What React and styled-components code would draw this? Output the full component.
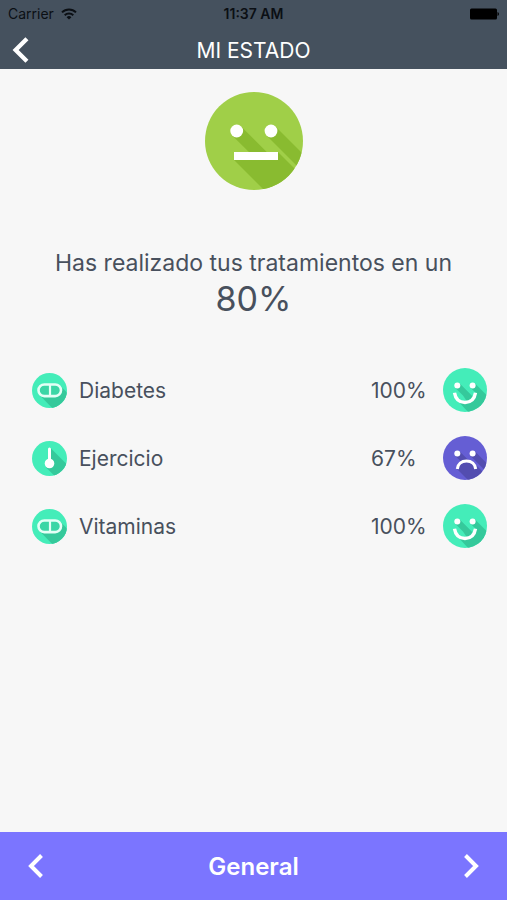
import { useId } from 'react';
import styled, { createGlobalStyle } from 'styled-components';

const treatments = [
    { name: 'Diabetes', icon: 'pill', percent: 100, mood: 'happy' },
    { name: 'Ejercicio', icon: 'thermometer', percent: 67, mood: 'sad' },
    { name: 'Vitaminas', icon: 'pill', percent: 100, mood: 'happy' },
];

const WifiIcon = () => (
    <svg width="16" height="12" viewBox="0 0 16 12" fill="none" stroke="#0b0f14" strokeWidth="2" aria-hidden="true">
        <path d="M1 4.4a10 10 0 0 1 14 0" />
        <path d="M3.7 7.2a6.2 6.2 0 0 1 8.6 0" />
        <path d="M8 11.6L5.6 9.2a3.5 3.5 0 0 1 4.8 0z" fill="#0b0f14" stroke="none" />
    </svg>
);

const BatteryIcon = () => (
    <svg width="29" height="12" viewBox="0 0 29 12" aria-hidden="true">
        <rect x="0" y="0.5" width="27" height="11" rx="1.5" />
        <path d="M27.5 4v4q1.5-.5 1.5-2t-1.5-2z" />
    </svg>
);

const Chevron = ({ right, size = 26 }) => (
    <svg width={size} height={size} viewBox="0 0 26 26" fill="none" stroke="#fff" strokeWidth="4" aria-hidden="true">
        <path d={right ? 'M7.5 2.5L18 13L7.5 23.5' : 'M18.5 2.5L8 13L18.5 23.5'} />
    </svg>
);

const NeutralFace = () => {
    const clip = useId();
    return (
        <svg width="98" height="98" viewBox="0 0 98 98" role="img" aria-label="Estado neutral">
            <clipPath id={clip}>
                <circle cx="49" cy="49" r="49" />
            </clipPath>
            <circle cx="49" cy="49" r="49" fill="#a0cf48" />
            <g clipPath={`url(#${clip})`} fill="#89bb30">
                <path d="M36.2 34.5L62 60.3V68H52L27.2 43.5z" />
                <path d="M70.5 34.5L120 84L111 93L61.5 43.5z" />
                <path d="M73 60L123 110L79 118L29 68z" />
            </g>
            <g fill="#fff">
                <circle cx="31.7" cy="39" r="6.4" />
                <circle cx="66" cy="39" r="6.4" />
                <rect x="29" y="60" width="44" height="8" />
            </g>
        </svg>
    );
};

const HappyFace = () => {
    const clip = useId();
    return (
        <svg width="44" height="44" viewBox="0 0 44 44" role="img" aria-label="Bien">
            <clipPath id={clip}>
                <circle cx="22" cy="22" r="22" />
            </clipPath>
            <circle cx="22" cy="22" r="22" fill="#44edb9" />
            <g clipPath={`url(#${clip})`} fill="#35c99b">
                <path d="M16.5 15.3L30 28.8L24 33.5L20 27.5L12.1 19.7z" />
                <path d="M31.8 15.3L56 39.5L40 50L31 31L33 25L27.4 19.7z" />
                <path d="M33.5 25L58 49.5L38 58L14 32L22 35.5L30 32z" />
            </g>
            <circle cx="14.3" cy="17.5" r="3" fill="#fff" />
            <circle cx="29.6" cy="17.5" r="3" fill="#fff" />
            <path d="M11.5 24.8C12.5 31 16.5 34.5 22 34.5S31.5 31 32.5 24.8" fill="none" stroke="#fff" strokeWidth="3.4" />
        </svg>
    );
};

const SadFace = () => {
    const clip = useId();
    return (
        <svg width="44" height="44" viewBox="0 0 44 44" role="img" aria-label="Mal">
            <clipPath id={clip}>
                <circle cx="22" cy="22" r="22" />
            </clipPath>
            <circle cx="22" cy="22" r="22" fill="#655ed4" />
            <g clipPath={`url(#${clip})`} fill="#534db0">
                <path d="M16.5 15.3L25 23.8L18 25.6L12.1 19.7z" />
                <path d="M31.8 15.3L56 39.5L51 43.5L27.4 19.7z" />
                <path d="M29 25L58 54L38 57L13.5 32.5L18 27z" />
            </g>
            <circle cx="14.3" cy="17.5" r="3" fill="#fff" />
            <circle cx="29.6" cy="17.5" r="3" fill="#fff" />
            <path d="M14.3 33C14.8 28 18.5 25 23.5 25S32.2 28 32.7 33" fill="none" stroke="#fff" strokeWidth="3" />
        </svg>
    );
};

const PillIcon = () => {
    const clip = useId();
    return (
        <svg width="35" height="35" viewBox="0 0 35 35" aria-hidden="true">
            <clipPath id={clip}>
                <circle cx="17.5" cy="17.5" r="17.5" />
            </clipPath>
            <circle cx="17.5" cy="17.5" r="17.5" fill="#44edb9" />
            <path clipPath={`url(#${clip})`} d="M28 12.5L45 29.5L27 42L8 22.5z" fill="#35c99b" />
            <rect x="6.5" y="11.5" width="22.5" height="11.6" rx="5.8" fill="#3bd6a6" stroke="#e4fff6" strokeWidth="2.6" />
            <path d="M18 12V23" stroke="#e4fff6" strokeWidth="2.2" />
        </svg>
    );
};

const ThermometerIcon = () => {
    const clip = useId();
    return (
        <svg width="35" height="35" viewBox="0 0 35 35" aria-hidden="true">
            <clipPath id={clip}>
                <circle cx="17.5" cy="17.5" r="17.5" />
            </clipPath>
            <circle cx="17.5" cy="17.5" r="17.5" fill="#44edb9" />
            <path clipPath={`url(#${clip})`} d="M18.5 7L42 30.5L30 42L14 26.5L17.5 20z" fill="#35c99b" />
            <path d="M17.5 8V20" stroke="#fff" strokeWidth="3" strokeLinecap="round" />
            <circle cx="17.5" cy="22.5" r="4.8" fill="#fff" />
        </svg>
    );
};

const App = () => {
    return (
        <Page>
            <GlobalStyle />
            <Header>
                <StatusBar>
                    <Carrier>
                        Carrier <WifiIcon />
                    </Carrier>
                    <Clock>11:37 AM</Clock>
                    <Battery>
                        <BatteryIcon />
                    </Battery>
                </StatusBar>
                <NavBar>
                    <IconButton aria-label="Volver">
                        <Chevron size={28} />
                    </IconButton>
                    <Title>MI ESTADO</Title>
                </NavBar>
            </Header>
            <Content>
                <NeutralFace />
                <Summary>
                    Has realizado tus tratamientos en un
                    <Total>80%</Total>
                </Summary>
                <TreatmentList>
                    {treatments.map(({ name, icon, percent, mood }) => (
                        <Treatment key={name}>
                            {icon === 'pill' ? <PillIcon /> : <ThermometerIcon />}
                            <Name>{name}</Name>
                            <Percent>{percent}%</Percent>
                            {mood === 'happy' ? <HappyFace /> : <SadFace />}
                        </Treatment>
                    ))}
                </TreatmentList>
            </Content>
            <Footer>
                <IconButton aria-label="Anterior">
                    <Chevron />
                </IconButton>
                <Section>General</Section>
                <IconButton aria-label="Siguiente">
                    <Chevron right />
                </IconButton>
            </Footer>
        </Page>
    );
};

const GlobalStyle = createGlobalStyle`
    * {
        box-sizing: border-box;
    }

    body {
        margin: 0;
        background-color: #f7f7f7;
        color: #48505d;
        font-family: Inter, 'Liberation Sans', sans-serif;
    }

    svg {
        display: block;
        flex-shrink: 0;
    }
`;

const Page = styled.div`
    display: flex;
    flex-direction: column;
    min-height: 100vh;
`;

const Header = styled.header`
    background-color: #45515e;
`;

const StatusBar = styled.div`
    display: grid;
    grid-template-columns: 1fr auto 1fr;
    align-items: center;
    height: 27px;
    padding: 0 8px;

    color: #0b0f14;
    font-size: 14px;
`;

const Carrier = styled.span`
    display: flex;
    align-items: center;
    gap: 7px;
`;

const Clock = styled.span`
    font-weight: 600;
`;

const Battery = styled.span`
    justify-self: end;
`;

const NavBar = styled.div`
    display: grid;
    grid-template-columns: 42px 1fr 42px;
    align-items: center;
    height: 42px;
    padding-top: 4px;
`;

const IconButton = styled.button`
    display: flex;
    align-items: center;
    justify-content: center;
    padding: 0;
    border: none;
    background: none;
    cursor: pointer;
`;

const Title = styled.h1`
    margin: 0;
    color: #fff;
    font-size: 21px;
    font-weight: 400;
    text-align: center;
`;

const Content = styled.main`
    display: flex;
    flex: 1;
    flex-direction: column;
    align-items: center;
    padding: 23px 0;
`;

const Summary = styled.p`
    margin: 57px 0 0;
    font-size: 23px;
    line-height: 32px;
    text-align: center;
`;

const Total = styled.strong`
    display: block;
    font-size: 34px;
    font-weight: 400;
    line-height: 40px;
`;

const TreatmentList = styled.ul`
    display: flex;
    flex-direction: column;
    gap: 24px;
    width: 100%;
    margin: 49px 0 0;
    padding: 0 20px 0 32px;
    list-style: none;
`;

const Treatment = styled.li`
    display: flex;
    align-items: center;
    min-height: 44px;

    font-size: 21px;
`;

const Name = styled.span`
    flex: 1;
    padding-left: 12px;
`;

const Percent = styled.span`
    width: 72px;
`;

const Footer = styled.footer`
    display: grid;
    grid-template-columns: 72px 1fr 72px;
    align-items: center;
    height: 68px;
    background-color: #7b75ff;
`;

const Section = styled.h2`
    margin: 0;
    color: #fff;
    font-size: 24px;
    font-weight: 600;
    text-align: center;
`;

export default App;
